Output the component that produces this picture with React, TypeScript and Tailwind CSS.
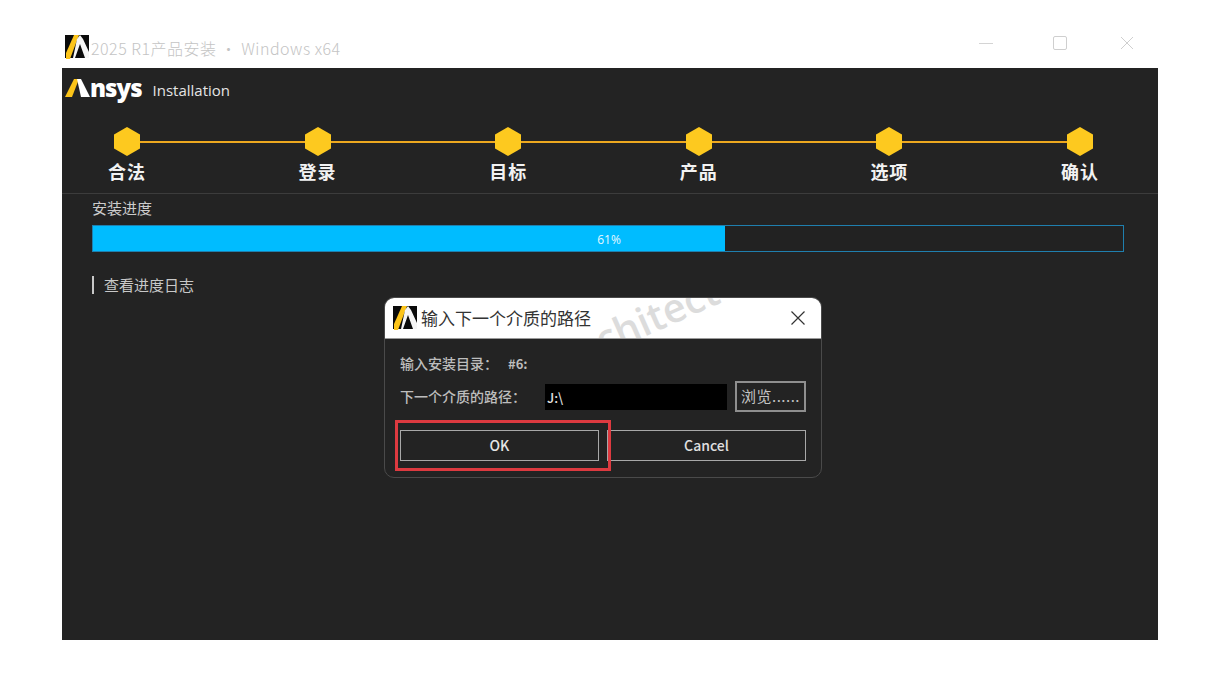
import React from 'react';

const cjk = '"Noto Sans CJK SC", "Noto Sans", sans-serif';
const serifCjk = '"Noto Sans CJK SC", serif';

const steps = ['合法', '登录', '目标', '产品', '选项', '确认'];

function Logo({ size }: { size: number }) {
  return (
    <svg width={size} height={size} viewBox="0 0 24 24" className="shrink-0">
      <rect x="0" y="0" width="24" height="23" fill="#0a0a0a" />
      <path d="M1 24 L1 18 L9 0 L14 0 L5 24 Z" fill="#fcc419" />
      <path d="M12 4 L15 0 L18 4 L24 17 L24 23 L20 23 L15 9 L10 23 L8 23 Z" fill="#f5f5f5" />
    </svg>
  );
}

function Hexagon() {
  return (
    <svg width="26" height="29" viewBox="0 0 26 29" className="shrink-0">
      <polygon points="13,0 26,7.5 26,21.5 13,29 0,21.5 0,7.5" fill="#fdc91f" />
    </svg>
  );
}

export default function App() {
  return (
    <div className="relative w-[1221px] h-[673px] bg-white overflow-hidden" style={{ fontFamily: cjk }}>
      <div className="ml-[62px] w-[1096px] h-[68px] flex items-start pt-[35px] pl-[3px]">
        <Logo size={24} />
        <span className="ml-[2px] text-[16px] leading-[26px] text-[#c4c4c4] tracking-[0.5px] font-light">2025 R1产品安装 · Windows x64</span>
        <div className="ml-auto flex items-center pt-[1px] pr-[24px]">
          <div className="w-[14px] h-[1px] bg-[#d4d4d4]" />
          <div className="ml-[60px] w-[14px] h-[14px] border border-[#cfcfcf] rounded-[2px]" />
          <svg width="14" height="14" viewBox="0 0 14 14" className="ml-[53px]">
            <path d="M1 1 L13 13 M13 1 L1 13" stroke="#cfcfcf" strokeWidth="1" fill="none" />
          </svg>
        </div>
      </div>

      <div className="ml-[62px] w-[1096px] h-[572px] bg-[#232323]">
        <div className="h-[44px] pl-[3px] flex items-center">
          <svg width="25" height="19" viewBox="0 0 25 19" className="shrink-0 -mt-[5px]">
            <path d="M0 19 L9 1 L14 1 L7 19 Z" fill="#fcc419" />
            <path d="M12 1 L16 1 L25 19 L16 19 Z" fill="#ffffff" />
          </svg>
          <span className="text-[24px] leading-none text-white tracking-[-1px] -mt-[4px]" style={{ fontFamily: '"Open Sans", sans-serif', fontWeight: 800 }}>nsys</span>
          <span className="ml-[11px] text-[15px] text-[#e5e5e5]" style={{ fontFamily: '"Open Sans", sans-serif' }}>Installation</span>
        </div>

        <div className="h-[82px] border-b border-[#3c3c3c] pl-[52px] pr-[65px] pt-[15px]">
          <div className="flex items-center">
            {steps.map((_, i) => (
              <React.Fragment key={i}>
                <Hexagon />
                {i < steps.length - 1 && <div className="flex-1 h-[2px] bg-[#eda81f]" />}
              </React.Fragment>
            ))}
          </div>
          <div className="flex justify-between -mx-[7px] mt-[4px]">
            {steps.map((s) => (
              <span key={s} className="w-[40px] text-center text-[18px] leading-[22px] font-bold text-[#f2f2f2] tracking-[1px]">{s}</span>
            ))}
          </div>
        </div>

        <div className="pl-[30px] pr-[34px]">
          <div className="pt-[4px] text-[15px] leading-[19px] text-[#cccccc]" style={{ fontFamily: serifCjk }}>安装进度</div>
          <div className="mt-[8px] h-[27px] border border-[#1f7fae] flex">
            <div className="w-[61.4%] bg-[#00bcff]" />
            <div className="flex-1 bg-[#222222]" />
          </div>
          <div className="mt-[24px] flex items-center">
            <div className="w-[2px] h-[18px] bg-[#c8c8c8]" />
            <span className="ml-[10px] text-[15px] leading-[18px] text-[#c8c8c8]" style={{ fontFamily: serifCjk }}>查看进度日志</span>
          </div>
        </div>
      </div>

      <span className="absolute left-[594px] top-[234px] w-[30px] text-center text-[12px] leading-none text-[#e8f8ff]" style={{ fontFamily: '"Open Sans", sans-serif' }}>61%</span>

      <div className="absolute left-[384px] top-[297px] w-[438px] h-[181px] rounded-[10px] overflow-hidden border border-[#4a4a4a] bg-[#232323]">
        <div className="relative h-[41px] bg-white border-b border-[#9a9a9a] flex items-center pl-[8px] pr-[15px] overflow-hidden">
          <span className="absolute left-[206px] top-[-3px] text-[40px] leading-none text-[#dcdcdc] -rotate-[24deg]" style={{ fontFamily: '"Open Sans", sans-serif', fontWeight: 600 }}>chitect</span>
          <div className="relative"><Logo size={24} /></div>
          <span className="relative ml-[4px] text-[17px] text-[#333333]">输入下一个介质的路径</span>
          <svg width="16" height="16" viewBox="0 0 16 16" className="relative ml-auto">
            <path d="M1.5 1.5 L14.5 14.5 M14.5 1.5 L1.5 14.5" stroke="#333333" strokeWidth="1.2" fill="none" />
          </svg>
        </div>
        <div className="pl-[15px] pr-[15px]">
          <div className="pt-[14px] text-[14px] leading-[20px] font-medium text-[#bdbdbd]" style={{ fontFamily: serifCjk }}>输入安装目录：<span className="ml-[10px] text-[13px] font-bold">#6:</span></div>
          <div className="mt-[7px] flex items-center">
            <span className="w-[145px] text-[14px] font-medium text-[#bdbdbd]" style={{ fontFamily: serifCjk }}>下一个介质的路径：</span>
            <div className="w-[182px] h-[26px] bg-black pl-[2px] text-[13px] font-medium leading-[27px] text-[#e0e0e0]">J:\</div>
            <div className="ml-[8px] w-[71px] h-[31px] border-2 border-[#8f8f8f] text-center text-[15px] leading-[26px] text-[#c4c4c4] tracking-[0.5px]" style={{ fontFamily: serifCjk }}>浏览......</div>
          </div>
          <div className="mt-[18px] flex gap-[8px]">
            <div className="w-[199px] h-[31px] border border-[#a8a8a8] text-center text-[14px] leading-[29px] font-medium text-[#e5e5e5]">OK</div>
            <div className="w-[199px] h-[31px] border border-[#a8a8a8] text-center text-[14px] leading-[29px] font-medium text-[#e0e0e0]">Cancel</div>
          </div>
        </div>
      </div>

      <div className="absolute left-[395px] top-[420px] w-[216px] h-[51px] border-[3px] border-[#dd3a40]" />
    </div>
  );
}
